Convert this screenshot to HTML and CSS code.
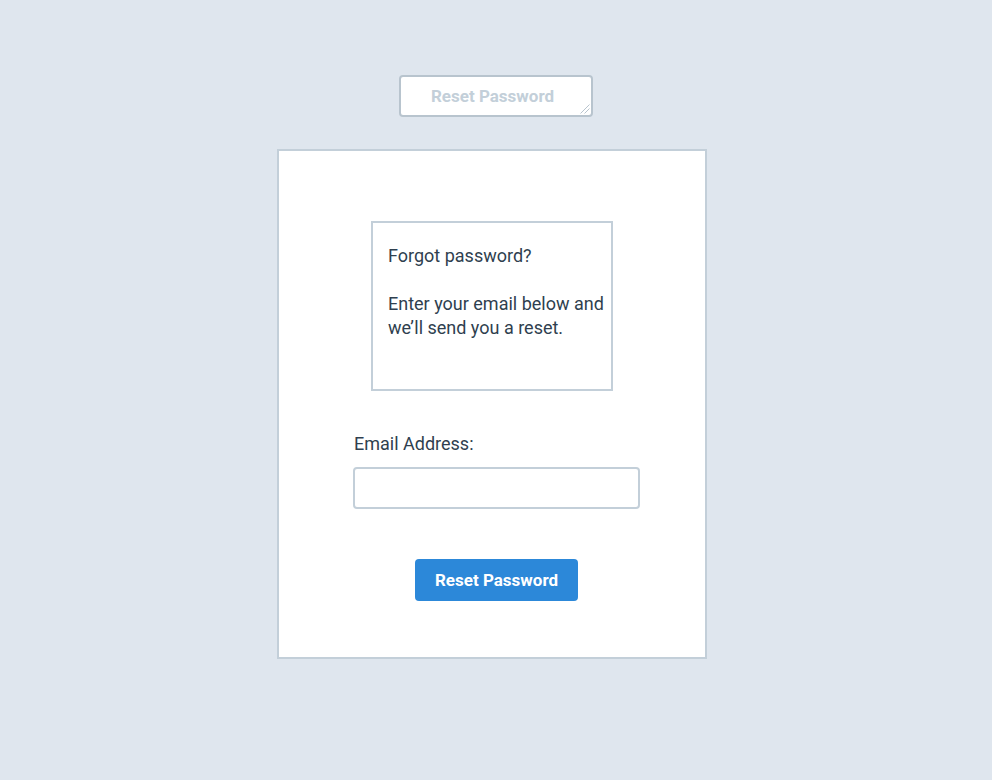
FILE: index.html
```html
<!DOCTYPE html>
<html lang="en">
<head>
  <meta charset="utf-8">
  <meta name="viewport" content="width=device-width, initial-scale=1">
  <title>Reset Password</title>
  <link rel="stylesheet" href="styles.css">
</head>
<body>
  <main class="page">
    <div class="heading">
      <textarea class="heading-box" aria-label="Page heading" rows="1" spellcheck="false">Reset Password</textarea>
      <svg class="grip" viewBox="0 0 10 10" width="10" height="10" aria-hidden="true">
        <path d="M0.5 9.5L9.5 0.5M4.5 9.5L9.5 4.5"/>
      </svg>
    </div>
    <form class="card">
      <div class="notice">
        <p>Forgot password?</p>
        <p>Enter your email below and we’ll send you a reset.</p>
      </div>
      <div class="field">
        <label for="email">Email Address:</label>
        <input id="email" class="field-input" type="email">
      </div>
      <button class="submit" type="button">Reset Password</button>
    </form>
  </main>
</body>
</html>
```
FILE: styles.css
```css
* {
  box-sizing: border-box;
}

body {
  margin: 0;
  background: #dfe6ee;
  color: #2f3f4f;
  font: 18px/24px Roboto, "Liberation Sans", sans-serif;
}

.page {
  max-width: 438px;
  margin: 0 auto;
  padding: 75px 0 32px;
}

.heading {
  position: relative;
  width: 194px;
  margin: 0 auto 32px;
}

.heading-box {
  display: block;
  width: 100%;
  height: 42px;
  padding: 7px 10px 7px 3px;
  overflow: hidden;
  border: 2px solid #b8c4ce;
  border-radius: 4px;
  background: #fff;
  color: #c3cfd9;
  font: inherit;
  font-size: 17px;
  font-weight: 700;
  text-align: center;
  resize: none;
}

.grip {
  position: absolute;
  right: 3px;
  bottom: 3px;
  fill: none;
  stroke: #b8c4ce;
  pointer-events: none;
}

.card {
  margin-right: 8px;
  padding: 70px 65px 56px 74px;
  border: 2px solid #c3cfd9;
  background: #fff;
}

.notice {
  max-width: 242px;
  min-height: 170px;
  margin-left: 18px;
  padding: 21px 0 20px 15px;
  border: 2px solid #c3cfd9;
}

.notice p {
  margin: 0 0 24px;
}

.field {
  margin-top: 41px;
}

.field label {
  display: block;
  margin-left: 1px;
}

.field-input {
  display: block;
  width: 100%;
  height: 42px;
  margin-top: 11px;
  padding: 0 12px;
  border: 2px solid #c3cfd9;
  border-radius: 4px;
  background: #fff;
  color: inherit;
  font: inherit;
}

.submit {
  display: block;
  width: 163px;
  height: 42px;
  margin: 50px auto 0;
  padding: 0;
  border: 0;
  border-radius: 4px;
  background: #2c88d9;
  color: #fff;
  font: inherit;
  font-size: 17px;
  font-weight: 700;
}
```
